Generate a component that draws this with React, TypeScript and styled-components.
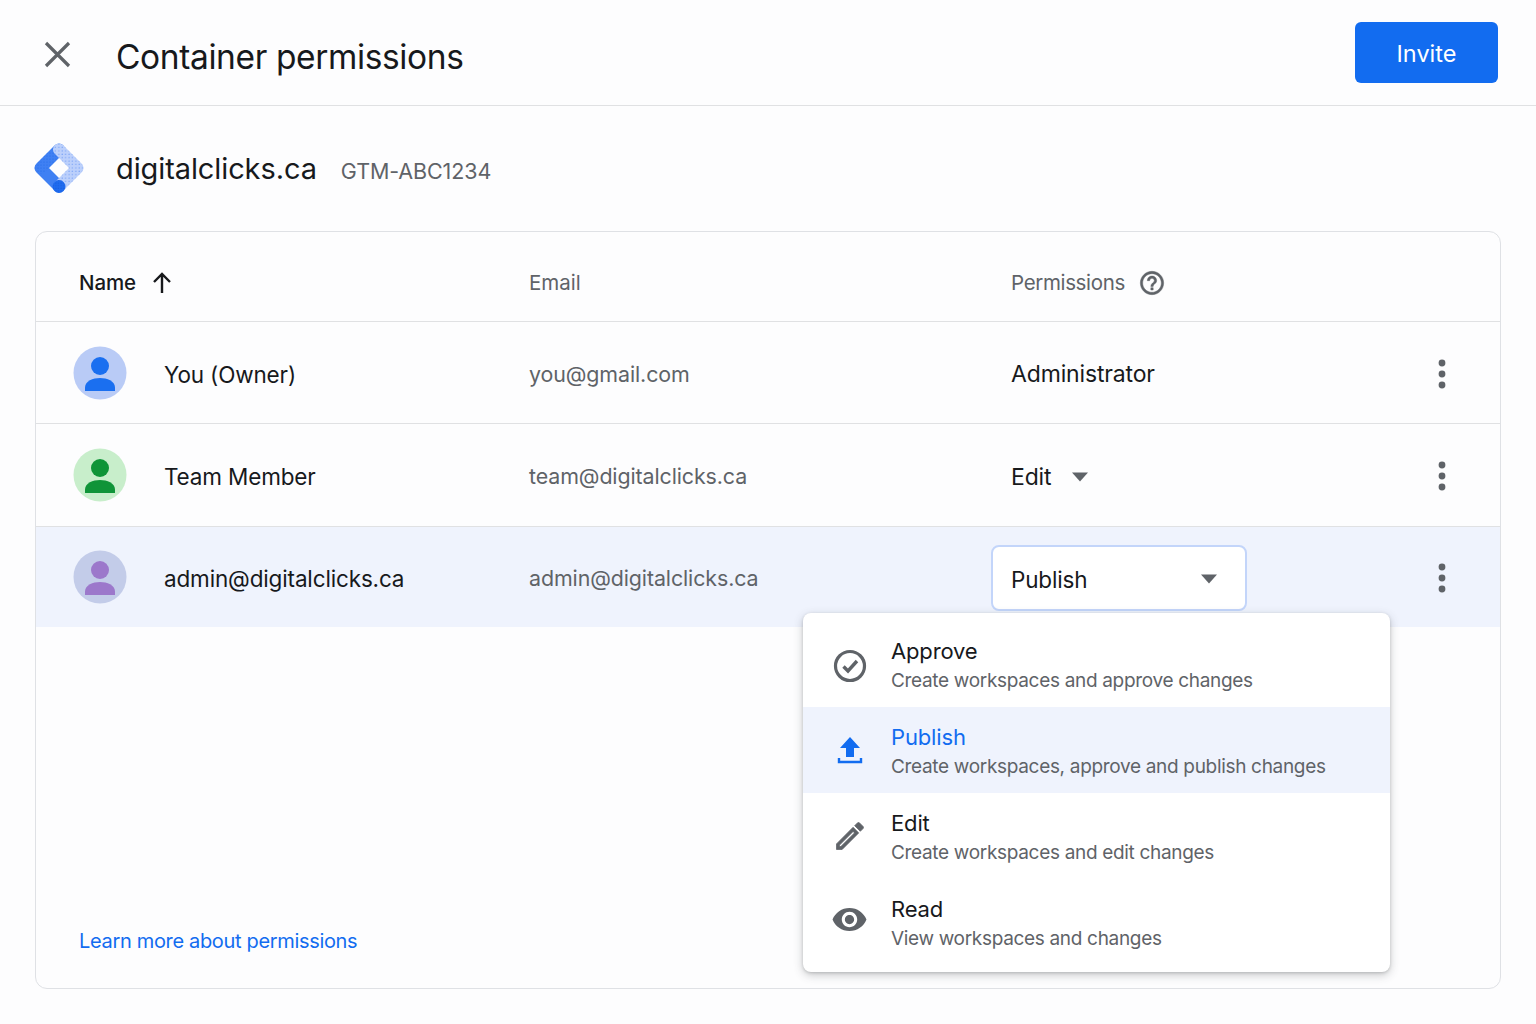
import React from 'react';
import styled, { createGlobalStyle } from 'styled-components';

const Global = createGlobalStyle`
  html, body { margin: 0; padding: 0; background: #fdfdfe; }
  body { font-family: Inter, "Noto Sans", sans-serif; color: #14171a; }
`;

const Page = styled.div`
  width: 1536px;
  height: 1024px;
  display: flex;
  flex-direction: column;
  overflow: hidden;
  background: #fdfdfe;
`;

const Header = styled.header`
  height: 105px;
  flex: none;
  display: flex;
  align-items: center;
  border-bottom: 1px solid #e0e1e3;
  padding: 0 38px 0 44px;
`;

const CloseButton = styled.button`
  width: 72px;
  height: 28px;
  flex: none;
  margin-top: 4px;
  padding: 0;
  border: 0;
  background: none;
  display: flex;
  align-items: center;
  color: #5f6368;
`;

const Title = styled.h1`
  margin: 9px 0 0;
  font-size: 33.5px;
  line-height: 40px;
  font-weight: 400;
  letter-spacing: -0.38px;
  color: #17191c;
  flex: 1;
`;

const InviteButton = styled.button`
  width: 143px;
  height: 61px;
  padding: 2px 0 0;
  border: 0;
  border-radius: 6px;
  background: #126cf0;
  color: #fff;
  font: 400 23.5px Inter, sans-serif;
`;

const ContainerInfo = styled.section`
  height: 125px;
  flex: none;
  display: flex;
  align-items: center;
  padding: 0 0 0 34px;
`;

const LogoSlot = styled.div`
  width: 82px;
  height: 52px;
  flex: none;
`;

const ContainerName = styled.span`
  font-size: 29px;
  letter-spacing: -0.1px;
  color: #17191c;
`;

const ContainerId = styled.span`
  margin: 4px 0 0 24px;
  font-size: 21.5px;
  letter-spacing: -0.1px;
  color: #5f6368;
`;

const Card = styled.main`
  flex: none;
  position: relative;
  margin: 0 35px;
  height: 758px;
  box-sizing: border-box;
  border: 1px solid #dfe1e5;
  border-radius: 12px;
  display: flex;
  flex-direction: column;
`;

const rowGrid = `
  display: grid;
  grid-template-columns: 493px 482px 1fr 40px;
  padding-right: 38px;
  align-items: center;
`;

const HeadRow = styled.div`
  ${rowGrid}
  height: 90px;
  box-sizing: border-box;
  padding-top: 12px;
  flex: none;
  border-bottom: 1px solid #e0e1e3;
  font-size: 20.5px;
  color: #5f6368;
`;

const NameHead = styled.div`
  display: flex;
  align-items: center;
  gap: 16px;
  padding-left: 43px;
  color: #17191c;
  font-weight: 500;
  letter-spacing: -0.1px;
`;

const PermHead = styled.div`
  display: flex;
  align-items: center;
  gap: 13px;
  letter-spacing: -0.35px;
`;

const Row = styled.div<{ $active?: boolean; $h: number; $last?: boolean }>`
  ${rowGrid}
  height: ${p => p.$h}px;
  flex: none;
  box-sizing: border-box;
  padding-top: 3px;
  background: ${p => (p.$active ? '#eff3fd' : 'transparent')};
  border-bottom: ${p => (p.$last ? '0' : '1px solid #e0e1e3')};
`;

const NameCell = styled.div`
  display: flex;
  align-items: center;
  gap: 37px;
  padding-left: 37px;
  font-size: 22.5px;
  letter-spacing: -0.15px;
  color: #17191c;
`;

const AvatarSlot = styled.div`
  width: 54px;
  height: 54px;
  margin-top: -3px;
  flex: none;
`;

const EmailCell = styled.div`
  margin-top: -1px;
  font-size: 21.4px;
  letter-spacing: -0.1px;
  color: #5f6368;
`;

const PermCell = styled.div`
  display: flex;
  align-items: center;
  gap: 20px;
  font-size: 23px;
  letter-spacing: -0.15px;
  color: #17191c;
`;

const Select = styled.div`
  width: 256px;
  height: 66px;
  box-sizing: border-box;
  margin: -1px 0 0 -20px;
  padding: 2px 27px 0 18px;
  display: flex;
  align-items: center;
  justify-content: space-between;
  font-size: 22.5px;
  background: #fff;
  border: 2px solid #c3d5fa;
  border-radius: 8px;
`;

const Kebab = styled.button`
  width: 40px;
  height: 40px;
  margin-top: -1px;
  padding: 0;
  border: 0;
  background: none;
  display: flex;
  align-items: center;
  justify-content: center;
`;

const LearnLink = styled.a`
  margin-top: auto;
  margin-bottom: 35px;
  margin-left: 43px;
  font-size: 20px;
  letter-spacing: -0.33px;
  color: #126cf0;
  text-decoration: none;
`;

const Menu = styled.div`
  position: absolute;
  left: 767px;
  top: 381px;
  width: 587px;
  box-sizing: border-box;
  padding: 8px 0 7px;
  background: #fff;
  border-radius: 8px;
  box-shadow: 0 3px 10px rgba(60, 64, 67, 0.28), 0 1px 3px rgba(60, 64, 67, 0.2);
`;

const MenuItem = styled.div<{ $selected?: boolean }>`
  height: 86px;
  box-sizing: border-box;
  padding-top: 3px;
  display: grid;
  grid-template-columns: 88px 1fr;
  align-items: center;
  background: ${p => (p.$selected ? '#eff3fd' : 'transparent')};
`;

const MenuIcon = styled.div<{ $selected?: boolean; $dy: number }>`
  display: flex;
  justify-content: center;
  padding-left: 5px;
  margin-top: ${p => p.$dy}px;
  color: ${p => (p.$selected ? '#126cf0' : '#5f6368')};
`;

const MenuLabel = styled.div<{ $selected?: boolean }>`
  font-size: 22px;
  line-height: 29px;
  letter-spacing: -0.15px;
  color: ${p => (p.$selected ? '#126cf0' : '#17191c')};
`;

const MenuDesc = styled.div`
  font-size: 19px;
  line-height: 29px;
  letter-spacing: -0.32px;
  color: #5f6368;
`;

const Logo = () => (
  <svg width="50" height="52" viewBox="0 0 50 52" aria-hidden="true">
    <defs>
      <pattern id="dotsLight" width="3.4" height="3.4" patternUnits="userSpaceOnUse">
        <circle cx="1" cy="1" r="0.65" fill="#6f9bf5" />
      </pattern>
      <pattern id="dotsMid" width="3" height="3" patternUnits="userSpaceOnUse">
        <circle cx="1" cy="1" r="0.55" fill="#1f66e6" />
      </pattern>
      <pattern id="dotsDark" width="2.6" height="2.6" patternUnits="userSpaceOnUse">
        <circle cx="1" cy="1" r="0.6" fill="#1557d8" />
      </pattern>
    </defs>
    <g fill="none" strokeWidth="12" strokeLinecap="round" strokeLinejoin="round">
      <path d="M25 6.5 L6.5 25 L25 43.5" stroke="#3f80f3" />
      <path d="M17 14.5 L6.5 25" stroke="url(#dotsMid)" />
      <path d="M25 6.5 L43.5 25 L25 43.5" stroke="#bcd0fb" />
      <path d="M25 6.5 L43.5 25 L25 43.5" stroke="url(#dotsLight)" />
    </g>
    <circle cx="25" cy="43.5" r="6.4" fill="#1f6cf0" />
    <circle cx="25" cy="43.5" r="6.4" fill="url(#dotsDark)" />
  </svg>
);

const CloseIcon = () => (
  <svg width="28" height="28" viewBox="0 0 28 28" aria-hidden="true">
    <path d="M2 2 L25 25 M25 2 L2 25" stroke="currentColor" strokeWidth="3.2" fill="none" />
  </svg>
);

const ArrowUp = () => (
  <svg width="20" height="22" viewBox="0 0 20 22" aria-hidden="true">
    <path d="M10 21 V2 M2 10 L10 2 L18 10" stroke="#17191c" strokeWidth="2.4" fill="none" />
  </svg>
);

const HelpIcon = () => (
  <svg width="28" height="28" viewBox="0 0 24 24" fill="#5f6368" stroke="#5f6368" strokeWidth="0.4" aria-hidden="true">
    <path d="M11 18h2v-2h-2v2zm1-16C6.48 2 2 6.48 2 12s4.48 10 10 10 10-4.48 10-10S17.52 2 12 2zm0 18c-4.41 0-8-3.59-8-8s3.59-8 8-8 8 3.59 8 8-3.59 8-8 8zm0-14c-2.21 0-4 1.79-4 4h2c0-1.1.9-2 2-2s2 .9 2 2c0 2-3 1.75-3 5h2c0-2.25 3-2.5 3-5 0-2.21-1.79-4-4-4z" />
  </svg>
);

const Avatar = ({ bg, fg }: { bg: string; fg: string }) => (
  <svg width="54" height="54" viewBox="0 0 54 54" aria-hidden="true">
    <circle cx="27" cy="27" r="26.5" fill={bg} />
    <circle cx="27" cy="20" r="9" fill={fg} />
    <path d="M12 45 v-3.5 c0-6.5 8-9.5 15-9.5 s15 3 15 9.5 V45 z" fill={fg} />
  </svg>
);

const Dots = () => (
  <svg width="8" height="30" viewBox="0 0 8 30" fill="#5f6368" aria-hidden="true">
    <circle cx="4" cy="4" r="3.4" />
    <circle cx="4" cy="15" r="3.4" />
    <circle cx="4" cy="26" r="3.4" />
  </svg>
);

const Caret = () => (
  <svg width="18" height="10" viewBox="0 0 18 10" fill="#5f6368" aria-hidden="true">
    <path d="M1 0.5 H17 L9 9.5 Z" />
  </svg>
);

const CheckCircle = () => (
  <svg width="34" height="34" viewBox="0 0 34 34" fill="none" stroke="currentColor" aria-hidden="true">
    <circle cx="17" cy="17" r="14.5" strokeWidth="3.2" />
    <path d="M10.5 17.5 L15 22 L24 12" strokeWidth="3.4" />
  </svg>
);

const UploadIcon = () => (
  <svg width="28" height="30" viewBox="0 0 28 30" aria-hidden="true">
    <path d="M14 2 L24 13 H18 V22 H10 V13 H4 Z" fill="currentColor" />
    <path d="M3 23 v4 h22 v-4" fill="none" stroke="currentColor" strokeWidth="2.4" />
  </svg>
);

const EditIcon = () => (
  <svg width="36" height="36" viewBox="0 0 24 24" fill="currentColor" stroke="currentColor" strokeWidth="0.5" aria-hidden="true">
    <path d="M14.06 9.02l.92.92L5.92 19H5v-.92l9.06-9.06M17.66 3c-.25 0-.51.1-.7.29l-1.83 1.83 3.75 3.75 1.83-1.83c.39-.39.39-1.02 0-1.41l-2.34-2.34c-.2-.2-.45-.29-.71-.29zm-3.6 3.19L3 17.25V21h3.75L17.81 9.94l-3.75-3.75z" />
  </svg>
);

const EyeIcon = () => (
  <svg width="37" height="37" viewBox="0 0 24 24" fill="currentColor" aria-hidden="true">
    <path d="M12 4.5C7 4.5 2.73 7.61 1 12c1.73 4.39 6 7.5 11 7.5s9.27-3.11 11-7.5c-1.73-4.39-6-7.5-11-7.5zM12 17c-2.76 0-5-2.24-5-5s2.24-5 5-5 5 2.24 5 5-2.24 5-5 5zm0-8c-1.66 0-3 1.34-3 3s1.34 3 3 3 3-1.34 3-3-1.34-3-3-3z" />
  </svg>
);

const people = [
  { name: 'You (Owner)', email: 'you@gmail.com', bg: '#b9cbf6', fg: '#1a6ff0', h: 102 },
  { name: 'Team Member', email: 'team@digitalclicks.ca', bg: '#c8eecb', fg: '#0f9438', h: 103 },
  { name: 'admin@digitalclicks.ca', email: 'admin@digitalclicks.ca', bg: '#c3cce9', fg: '#9c78cb', h: 100 },
];

const options = [
  { label: 'Approve', desc: 'Create workspaces and approve changes', icon: <CheckCircle />, dy: 0 },
  { label: 'Publish', desc: 'Create workspaces, approve and publish changes', icon: <UploadIcon />, selected: true, dy: -3 },
  { label: 'Edit', desc: 'Create workspaces and edit changes', icon: <EditIcon />, dy: -3 },
  { label: 'Read', desc: 'View workspaces and changes', icon: <EyeIcon />, dy: -9 },
];

export default function App() {
  return (
    <Page>
      <Global />
      <Header>
        <CloseButton aria-label="Close"><CloseIcon /></CloseButton>
        <Title>Container permissions</Title>
        <InviteButton>Invite</InviteButton>
      </Header>
      <ContainerInfo>
        <LogoSlot><Logo /></LogoSlot>
        <ContainerName>digitalclicks.ca</ContainerName>
        <ContainerId>GTM-ABC1234</ContainerId>
      </ContainerInfo>
      <Card>
        <HeadRow>
          <NameHead>Name <ArrowUp /></NameHead>
          <div>Email</div>
          <PermHead>Permissions <HelpIcon /></PermHead>
        </HeadRow>
        {people.map((p, i) => (
          <Row key={p.email} $h={p.h} $active={i === 2} $last={i === 2}>
            <NameCell><AvatarSlot><Avatar bg={p.bg} fg={p.fg} /></AvatarSlot>{p.name}</NameCell>
            <EmailCell>{p.email}</EmailCell>
            {i === 0 && <PermCell>Administrator</PermCell>}
            {i === 1 && <PermCell>Edit <Caret /></PermCell>}
            {i === 2 && <PermCell><Select>Publish <Caret /></Select></PermCell>}
            <Kebab aria-label="More"><Dots /></Kebab>
          </Row>
        ))}
        <LearnLink href="#">Learn more about permissions</LearnLink>
        <Menu>
          {options.map(o => (
            <MenuItem key={o.label} $selected={o.selected}>
              <MenuIcon $selected={o.selected} $dy={o.dy}>{o.icon}</MenuIcon>
              <div>
                <MenuLabel $selected={o.selected}>{o.label}</MenuLabel>
                <MenuDesc>{o.desc}</MenuDesc>
              </div>
            </MenuItem>
          ))}
        </Menu>
      </Card>
    </Page>
  );
}
